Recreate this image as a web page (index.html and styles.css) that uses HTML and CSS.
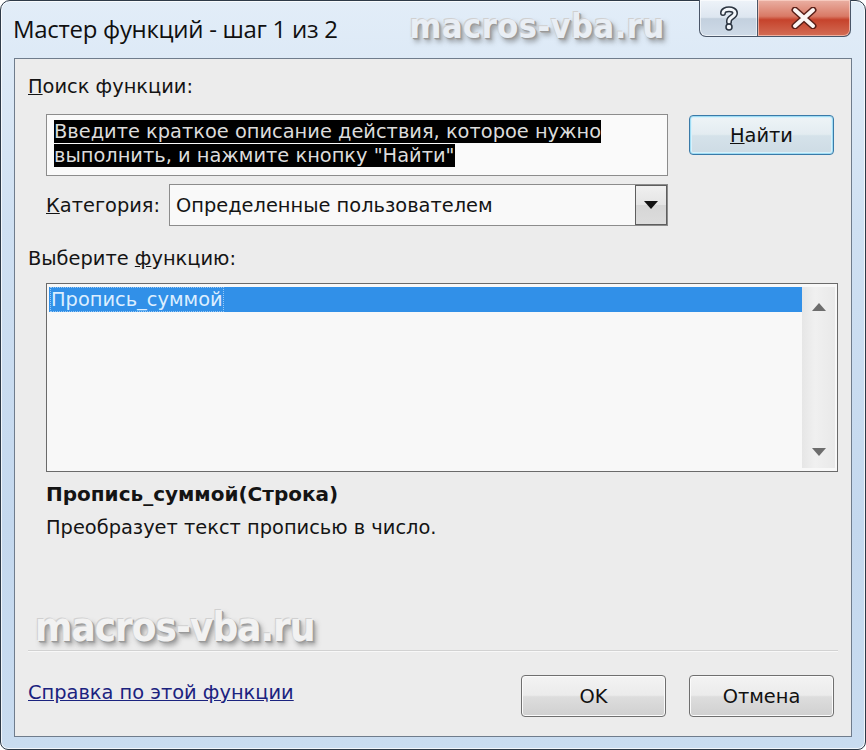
FILE: index.html
```html
<!DOCTYPE html>
<html lang="ru">
<head>
<meta charset="utf-8">
<title>Мастер функций - шаг 1 из 2</title>
<link rel="stylesheet" href="styles.css">
</head>
<body>
<div class="window">
  <div class="titlebar">
    <div class="title">Мастер функций - шаг 1 из 2</div>
    <div class="wm wm-title">macros-vba.ru</div>
    <div class="caption-btns">
      <div class="cbtn help">
        <svg width="20" height="26" viewBox="0 0 20 26"><path d="M4 8 C4 3 16 3 16 8 C16 12 10 12 10 16 L10 17" fill="none" stroke="#2b3440" stroke-width="6" stroke-linecap="round"/><path d="M4 8 C4 3 16 3 16 8 C16 12 10 12 10 16 L10 17" fill="none" stroke="#f4f7fb" stroke-width="3" stroke-linecap="round"/><circle cx="10" cy="22" r="3" fill="#f4f7fb" stroke="#2b3440" stroke-width="1.5"/></svg>
      </div>
      <div class="cbtn close">
        <svg width="26" height="22" viewBox="0 0 26 22"><path d="M4 3 L22 19 M22 3 L4 19" stroke="#5a2018" stroke-width="7" stroke-linecap="round"/><path d="M4 3 L22 19 M22 3 L4 19" stroke="#fbf6f4" stroke-width="4" stroke-linecap="round"/></svg>
      </div>
    </div>
  </div>
  <div class="client">
    <div class="label"><u>П</u>оиск функции:</div>
    <div class="search-row">
      <div class="textbox"><span class="selected-text">Введите краткое описание действия, которое нужно<br>выполнить, и нажмите кнопку "Найти"</span></div>
      <div class="btn default"><u>Н</u>айти</div>
    </div>
    <div class="cat-row">
      <span class="cat-label"><u>К</u>атегория:</span>
      <div class="combo">
        <span class="combo-text">Определенные пользователем</span>
        <div class="drop">
          <svg width="14" height="8" viewBox="0 0 14 8"><path d="M0 0 H14 L7 8 Z" fill="#111"/></svg>
        </div>
      </div>
    </div>
    <div class="label label-fn">Выберите <u>ф</u>ункцию:</div>
    <div class="listbox">
      <div class="items">
        <div class="item selected"><span class="focus">Пропись_суммой</span></div>
      </div>
      <div class="scrollbar">
        <svg width="14" height="8" viewBox="0 0 14 8"><path d="M0 8 L7 0 L14 8 Z" fill="#6d6d6d"/></svg>
        <svg width="14" height="8" viewBox="0 0 14 8"><path d="M0 0 L14 0 L7 8 Z" fill="#6d6d6d"/></svg>
      </div>
    </div>
    <div class="sig">Пропись_суммой(Строка)</div>
    <div class="desc">Преобразует текст прописью в число.</div>
    <div class="wm wm-bottom">macros-vba.ru</div>
    <div class="sep"></div>
    <div class="footer">
      <a class="help-link" href="#">Справка по этой функции</a>
      <div class="btn">OK</div>
      <div class="btn">Отмена</div>
    </div>
  </div>
</div>
</body>
</html>
```

FILE: styles.css
```css
html, body {
  margin: 0;
  padding: 0;
  background: #ffffff;
}

.window {
  width: 866px;
  height: 750px;
  box-sizing: border-box;
  border: 1px solid #2e3a48;
  border-radius: 10px 10px 8px 8px;
  background: linear-gradient(180deg, #e2edf8 0%, #cfe0f2 30%, #c4d8ee 70%, #c9dcf0 100%);
  box-shadow: inset 0 0 0 1px rgba(255, 255, 255, 0.75);
  display: flex;
  flex-direction: column;
  padding: 0 13px 12px 13px;
  font-family: "DejaVu Sans", sans-serif;
  color: #141414;
}

.titlebar {
  height: 57px;
  display: flex;
  align-items: flex-start;
}

.title {
  font-family: "Open Sans", sans-serif;
  font-size: 24px;
  margin-top: 11px;
  margin-left: -1px;
  color: #101010;
  letter-spacing: -0.3px;
}

.wm {
  font-family: "DejaVu Sans Condensed", "DejaVu Sans", sans-serif;
  font-weight: bold;
  color: #f2f2f2;
  text-shadow: -1px -1px 0 #d0d0d0, 1px 1px 0 #999999, 2px 2px 1px #a8a8a8, 3px 4px 5px rgba(80, 80, 80, 0.5);
}

.wm-title {
  font-size: 34px;
  margin-left: 72px;
  margin-top: 5px;
  letter-spacing: 0.5px;
  color: #e9eef4;
}

.caption-btns {
  margin-left: auto;
  margin-right: 1px;
  margin-top: -1px;
  display: flex;
}

.cbtn {
  height: 37px;
  box-sizing: border-box;
  border: 1px solid #4a5668;
  border-top: none;
  display: flex;
  align-items: center;
  justify-content: center;
}

.help {
  width: 58px;
  border-radius: 0 0 0 7px;
  border-right: none;
  background: linear-gradient(180deg, #eef3f9 0%, #dde6f0 48%, #c3d0de 52%, #cfdbe8 100%);
  box-shadow: inset 0 0 0 1px rgba(255, 255, 255, 0.6);
}

.close {
  width: 94px;
  border-radius: 0 0 7px 0;
  background: linear-gradient(180deg, #eab0a3 0%, #d97a66 45%, #c6432c 55%, #d36d55 100%);
  box-shadow: inset 0 0 0 1px rgba(255, 220, 210, 0.6);
}

.client {
  flex: 1;
  border: 1px solid #6f7c8c;
  background: #ececec;
  display: flex;
  flex-direction: column;
  padding: 16px 13px 0 13px;
  font-size: 19.4px;
}

.label {
  line-height: 24px;
  height: 24px;
}

.search-row {
  display: flex;
  align-items: flex-start;
  margin-top: 15px;
  margin-left: 18px;
  gap: 21px;
}

.textbox {
  width: 622px;
  height: 62px;
  box-sizing: border-box;
  border: 1px solid #8c8c8c;
  background: #fafafa;
  padding: 5px 7px;
  line-height: 24px;
}

.selected-text {
  background: #000;
  color: #dcdcdc;
}

.btn {
  width: 145px;
  height: 42px;
  box-sizing: border-box;
  border: 1px solid #6f6f6f;
  border-radius: 4px;
  background: linear-gradient(180deg, #f3f3f3 0%, #ebebeb 48%, #dddddd 52%, #d0d0d0 100%);
  box-shadow: inset 0 0 0 1px #fbfbfb;
  display: flex;
  align-items: center;
  justify-content: center;
  font-family: "DejaVu Sans", sans-serif;
  font-size: 19.4px;
  color: #111;
}

.btn.default {
  height: 40px;
  margin-top: 1px;
  border-color: #3a7aa8;
  background: linear-gradient(180deg, #eef4f7 0%, #e3ecf1 48%, #d5e2ea 52%, #cddbe4 100%);
  box-shadow: inset 0 0 0 1px #9fdcf4, inset 0 0 0 2px #d8f1fb;
}

.cat-row {
  display: flex;
  align-items: center;
  margin-top: 8px;
  margin-left: 18px;
}

.cat-label {
  width: 123px;
}

.combo {
  width: 499px;
  height: 42px;
  box-sizing: border-box;
  border: 1px solid #8c8c8c;
  background: #f9f9f9;
  display: flex;
  align-items: center;
}

.combo-text {
  flex: 1;
  padding-left: 6px;
}

.drop {
  width: 32px;
  height: 40px;
  box-sizing: border-box;
  border: 1px solid #5e5e5e;
  background: linear-gradient(180deg, #f0f0f0 0%, #e4e4e4 50%, #d6d6d6 51%, #dcdcdc 100%);
  display: flex;
  align-items: center;
  justify-content: center;
}

.label-fn {
  margin-top: 21px;
}

.listbox {
  margin-top: 12px;
  margin-left: 18px;
  width: 792px;
  height: 189px;
  box-sizing: border-box;
  border: 1px solid #6a6a6a;
  background: #f8f8f8;
  display: flex;
  padding: 3px 2px 3px 2px;
}

.items {
  flex: 1;
}

.item {
  height: 25px;
  line-height: 25px;
  padding-left: 2px;
}

.item.selected {
  background: #3190e8;
  color: #dceeff;
}

.focus {
  outline: 1px dotted rgba(220, 238, 255, 0.6);
}

.scrollbar {
  width: 33px;
  background: linear-gradient(90deg, #e6e6e6, #f0f0f0 40%, #e9e9e9);
  display: flex;
  flex-direction: column;
  justify-content: space-between;
  align-items: center;
  padding: 16px 0 12px 0;
  box-sizing: border-box;
}

.sig {
  margin-top: 9px;
  margin-left: 18px;
  font-weight: bold;
  font-size: 20px;
  line-height: 26px;
}

.desc {
  margin-top: 8px;
  margin-left: 18px;
  line-height: 26px;
}

.wm-bottom {
  margin-top: 63px;
  margin-left: 7px;
  font-size: 40px;
  line-height: 46px;
  height: 46px;
  letter-spacing: -1px;
}

.sep {
  height: 1px;
  background: #d2d2d2;
  border-bottom: 1px solid #f8f8f8;
}

.footer {
  display: flex;
  align-items: center;
  margin-top: 23px;
  margin-right: 4px;
  gap: 23px;
}

.help-link {
  color: #1b237f;
  text-decoration: underline;
  margin-right: auto;
  margin-top: -7px;
}
```
